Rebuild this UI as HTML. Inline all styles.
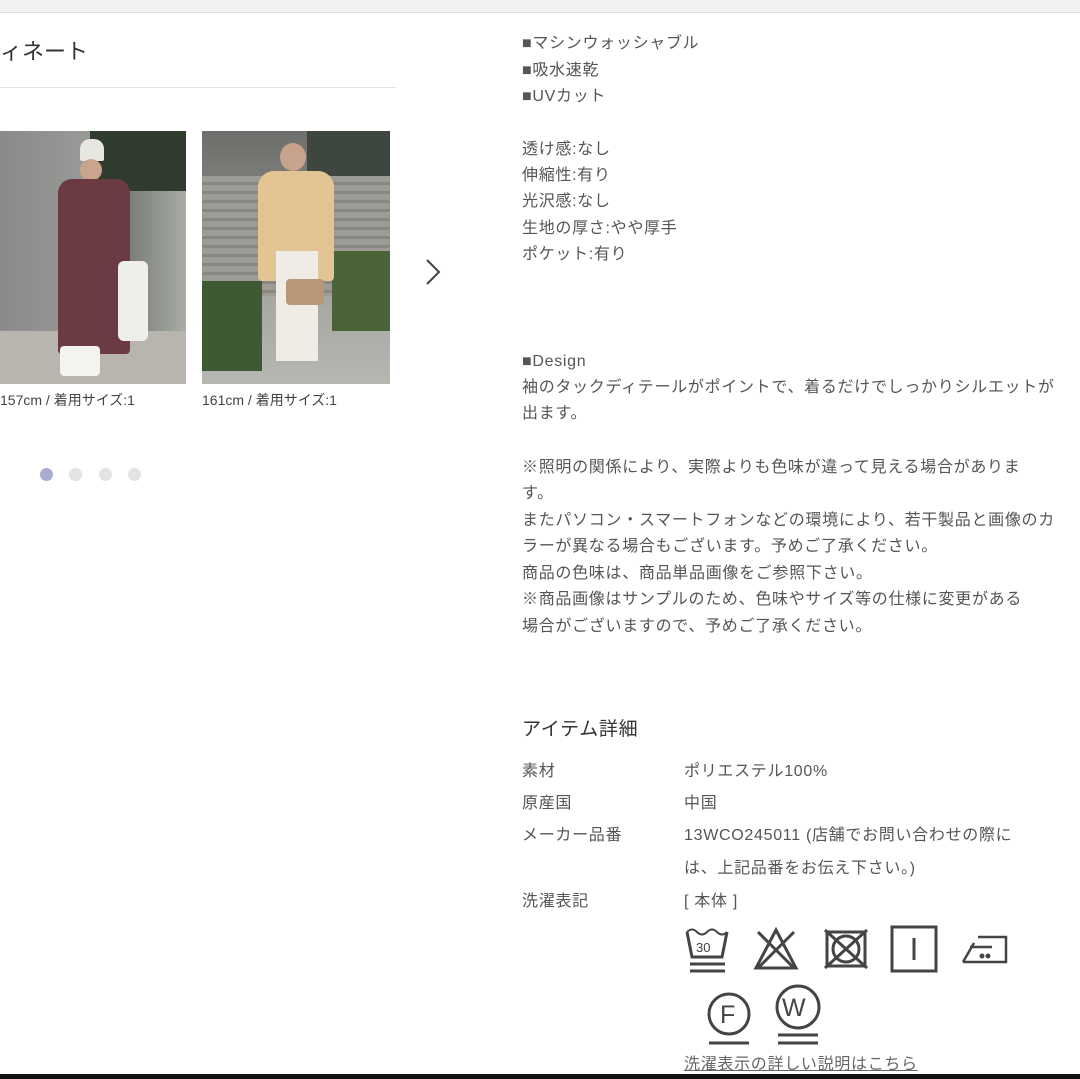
<!DOCTYPE html>
<html><head><meta charset="utf-8"><style>
body{margin:0;width:1080px;height:1079px;background:#fff;position:relative;overflow:hidden;font-family:"Liberation Sans","Noto Sans CJK JP",sans-serif;color:#555}
.t{position:absolute;font-size:16px;white-space:nowrap;line-height:20px}
.r{left:522px;letter-spacing:0.7px}
.v{left:684px;letter-spacing:0.7px}
</style></head><body>
<div style="position:absolute;left:0;top:0;width:1080px;height:12px;background:#f1f1f1;border-bottom:1px solid #ddd"></div>
<div class="t" style="left:0;top:39px;font-size:22px;color:#333;line-height:26px">ィネート</div>
<div style="position:absolute;left:0;top:87px;width:396px;height:1px;background:#e2e2e2"></div>
<div style="position:absolute;left:0;top:131px;width:186px;height:253px;overflow:hidden;background:linear-gradient(90deg,#8a8a88 0,#9a9a98 50%,#7a7d78 70%,#a9aca6 100%)">
<div style="position:absolute;left:90px;top:0;width:96px;height:60px;background:#2f3b2c"></div>
<div style="position:absolute;left:0;top:200px;width:186px;height:53px;background:#b8b4ae"></div>
<div style="position:absolute;left:80px;top:8px;width:24px;height:22px;background:#e8e6e0;border-radius:10px 10px 2px 2px"></div>
<div style="position:absolute;left:80px;top:28px;width:22px;height:22px;background:#c9a58f;border-radius:50%"></div>
<div style="position:absolute;left:58px;top:48px;width:72px;height:175px;background:#6b3a42;border-radius:14px 14px 4px 4px"></div>
<div style="position:absolute;left:118px;top:130px;width:30px;height:80px;background:#eeeeea;border-radius:6px"></div>
<div style="position:absolute;left:60px;top:215px;width:40px;height:30px;background:#f3f3f0;border-radius:4px"></div>
</div>
<div style="position:absolute;left:202px;top:131px;width:188px;height:253px;overflow:hidden;background:linear-gradient(180deg,#6e6e6c 0,#8a8a86 40%,#a3a39f 60%,#b7b7b2 100%)">
<div style="position:absolute;left:105px;top:0;width:83px;height:55px;background:#3e4640"></div>
<div style="position:absolute;left:0;top:45px;width:188px;height:120px;background:repeating-linear-gradient(180deg,#9c9b96 0 6px,#888781 6px 9px)"></div>
<div style="position:absolute;left:0;top:150px;width:60px;height:90px;background:#3f5a33"></div>
<div style="position:absolute;left:130px;top:120px;width:58px;height:80px;background:#4a6338"></div>
<div style="position:absolute;left:78px;top:12px;width:26px;height:28px;background:#c7a38c;border-radius:50%"></div>
<div style="position:absolute;left:56px;top:40px;width:76px;height:110px;background:#e2c592;border-radius:16px 16px 4px 4px"></div>
<div style="position:absolute;left:74px;top:120px;width:42px;height:110px;background:#efece6"></div>
<div style="position:absolute;left:84px;top:148px;width:38px;height:26px;background:#b89677;border-radius:4px"></div>
</div>
<div class="t" style="left:0;top:390px;font-size:14px;color:#444">157cm / 着用サイズ:1</div>
<div class="t" style="left:202px;top:390px;font-size:14px;color:#444">161cm / 着用サイズ:1</div>
<svg style="position:absolute;left:424px;top:257px" width="18" height="30"><path d="M3 3 L15 15 L3 27" fill="none" stroke="#444" stroke-width="2"/></svg>
<div style="position:absolute;left:40px;top:468px;width:13px;height:13px;border-radius:50%;background:#a9abd0"></div>
<div style="position:absolute;left:69px;top:468px;width:13px;height:13px;border-radius:50%;background:#e3e3e3"></div>
<div style="position:absolute;left:99px;top:468px;width:13px;height:13px;border-radius:50%;background:#e3e3e3"></div>
<div style="position:absolute;left:128px;top:468px;width:13px;height:13px;border-radius:50%;background:#e3e3e3"></div>

<div class="t r" style="top:34px">■マシンウォッシャブル</div>
<div class="t r" style="top:61px">■吸水速乾</div>
<div class="t r" style="top:87px">■UVカット</div>
<div class="t r" style="top:140px">透け感:なし</div>
<div class="t r" style="top:166px">伸縮性:有り</div>
<div class="t r" style="top:192px">光沢感:なし</div>
<div class="t r" style="top:219px">生地の厚さ:やや厚手</div>
<div class="t r" style="top:245px">ポケット:有り</div>
<div class="t r" style="top:352px">■Design</div>
<div class="t r" style="top:378px">袖のタックディテールがポイントで、着るだけでしっかりシルエットが</div>
<div class="t r" style="top:404px">出ます。</div>
<div class="t r" style="top:458px">※照明の関係により、実際よりも色味が違って見える場合がありま</div>
<div class="t r" style="top:484px">す。</div>
<div class="t r" style="top:511px">またパソコン・スマートフォンなどの環境により、若干製品と画像のカ</div>
<div class="t r" style="top:537px">ラーが異なる場合もございます。予めご了承ください。</div>
<div class="t r" style="top:564px">商品の色味は、商品単品画像をご参照下さい。</div>
<div class="t r" style="top:590px">※商品画像はサンプルのため、色味やサイズ等の仕様に変更がある</div>
<div class="t r" style="top:617px">場合がございますので、予めご了承ください。</div>
<div class="t r" style="top:718px;font-size:19px;color:#333;line-height:24px">アイテム詳細</div>
<div class="t r" style="top:762px">素材</div><div class="t v" style="top:762px">ポリエステル100%</div>
<div class="t r" style="top:794px">原産国</div><div class="t v" style="top:794px">中国</div>
<div class="t r" style="top:826px">メーカー品番</div><div class="t v" style="top:826px">13WCO245011 (店舗でお問い合わせの際に</div>
<div class="t v" style="top:859px">は、上記品番をお伝え下さい。)</div>
<div class="t r" style="top:892px">洗濯表記</div><div class="t v" style="top:892px">[ 本体 ]</div>
<svg style="position:absolute;left:670px;top:910px" width="410" height="160" fill="none" stroke="#444" stroke-width="3">
<path d="M17 22 L22 47 H52 L57 22"/><path d="M17 22 q5 -5 10 0 q5 5 10 0 q5 -5 10 0 q5 5 10 0" stroke-width="2"/>
<text x="26" y="42" font-size="13" fill="#444" stroke="none" font-family="Liberation Sans">30</text>
<path d="M20 54 H55 M20 61 H55"/>
<path d="M86 58 L106 20 L126 58 Z M88 22 L124 58 M124 22 L88 58"/>
<rect x="157" y="22" width="38" height="34"/><circle cx="176" cy="39" r="13"/><path d="M155 20 L197 58 M197 20 L155 58"/>
<rect x="222" y="17" width="44" height="44"/><path d="M244 28 V50"/>
<path d="M293 52 H336 V27 H308 M300 37 H322 M293 52 L304 33" stroke-width="2.5"/><circle cx="312" cy="46" r="1" fill="#444"/><circle cx="318" cy="46" r="1" fill="#444"/>
<circle cx="59" cy="104" r="20"/><text x="50" y="113" font-size="25" fill="#444" stroke="none" font-family="Liberation Sans">F</text><path d="M39 133 H79"/>
<circle cx="128" cy="97" r="21"/><text x="112" y="106" font-size="25" fill="#444" stroke="none" font-family="Liberation Sans">W</text><path d="M108 125 H148 M108 133 H148"/>
</svg>
<div class="t v" style="top:1055px;text-decoration:underline;color:#666">洗濯表示の詳しい説明はこちら</div>
<div style="position:absolute;left:0;top:1074px;width:1080px;height:5px;background:#111"></div>
</body></html>
